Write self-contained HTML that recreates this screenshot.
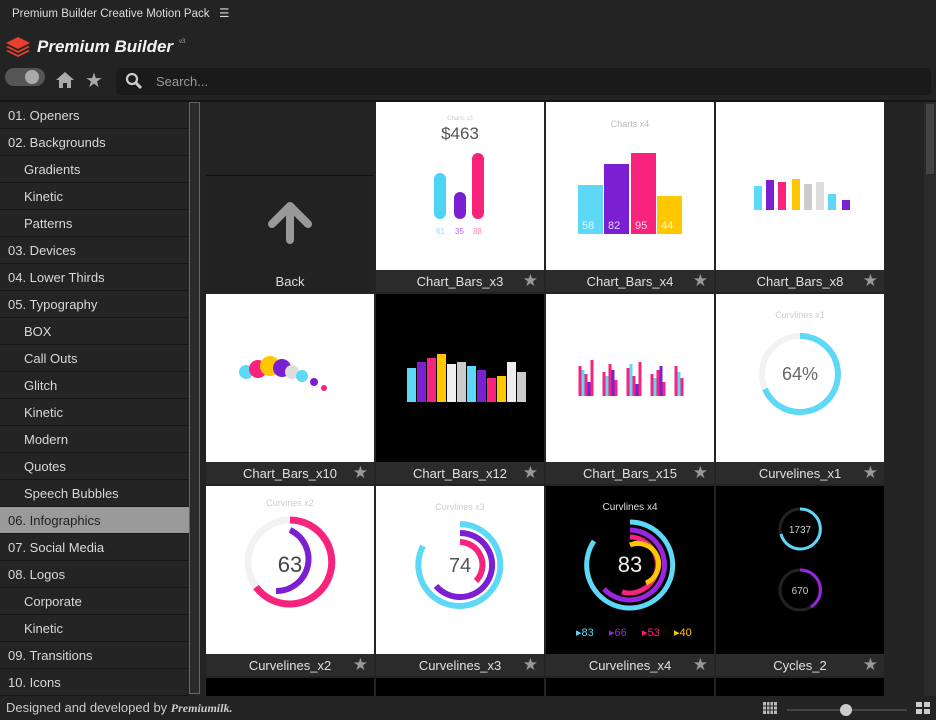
<!DOCTYPE html>
<html><head><meta charset="utf-8"><style>
*{margin:0;padding:0;box-sizing:border-box}
body{width:936px;height:720px;background:#232323;font-family:"Liberation Sans",sans-serif;color:#ddd;position:relative;overflow:hidden}
.abs{position:absolute}
.side div{height:27px;line-height:28px;font-size:13px;color:#d8d8d8;border-bottom:1px solid #151515;padding-left:8px;background:#242424}
.side div.s{padding-left:24px}
.side div.sel{background:#9a9a9a;color:#222}
.cell{position:absolute;width:168px;height:190px;background:#1c1c1c}
.cell svg{display:block}
.cap{position:absolute;left:0;top:168px;width:168px;height:22px;background:#2b2b2b;color:#e0e0e0;font-size:13px;text-align:center;line-height:24px}
.cap .st{position:absolute;right:6px;top:0;color:#999;font-size:17px;line-height:22px}
</style></head><body>
<div class="abs" style="left:12px;top:6px;font-size:11.5px;color:#ddd">Premium Builder Creative Motion Pack &nbsp;&nbsp;☰</div>
<svg class="abs" style="left:5px;top:36px" width="26" height="22" viewBox="0 0 26 22"><path d="M13 1L25 7L13 13L1 7Z" fill="#e8402c"/><path d="M3 10L13 15L23 10L25 11L13 17L1 11Z" fill="#e8402c"/><path d="M3 14L13 19L23 14L25 15L13 21L1 15Z" fill="#e8402c"/></svg>
<div class="abs" style="left:37px;top:37px;font-size:17px;font-weight:bold;font-style:italic;color:#f2f2f2">Premium Builder</div>
<div class="abs" style="left:179px;top:39px;font-size:6px;color:#aaa">v3</div>
<div class="abs" style="left:5px;top:68px;width:40px;height:18px;border-radius:9px;background:#555"></div>
<div class="abs" style="left:25px;top:70px;width:14px;height:14px;border-radius:7px;background:#aaa"></div>
<svg class="abs" style="left:55px;top:71px" width="20" height="18" viewBox="0 0 20 18"><path d="M10 1L19 9H16V17H12V12H8V17H4V9H1Z" fill="#aaa"/></svg>
<div class="abs" style="left:85px;top:68px;font-size:20px;color:#aaa">★</div>
<div class="abs" style="left:116px;top:68px;width:815px;height:27px;background:#1a1a1a;border-radius:4px"></div>
<svg class="abs" style="left:125px;top:72px" width="18" height="18" viewBox="0 0 18 18"><circle cx="7" cy="7" r="5" stroke="#ccc" stroke-width="2.2" fill="none"/><path d="M11 11L16 16" stroke="#ccc" stroke-width="3"/></svg>
<div class="abs" style="left:156px;top:74px;font-size:13px;color:#999">Search...</div>
<div class="abs" style="left:0;top:100px;width:936px;height:2px;background:#151515"></div>
<div class="abs side" style="left:0;top:102px;width:189px">
<div>01. Openers</div><div>02. Backgrounds</div><div class="s">Gradients</div><div class="s">Kinetic</div><div class="s">Patterns</div><div>03. Devices</div><div>04. Lower Thirds</div><div>05. Typography</div><div class="s">BOX</div><div class="s">Call Outs</div><div class="s">Glitch</div><div class="s">Kinetic</div><div class="s">Modern</div><div class="s">Quotes</div><div class="s">Speech Bubbles</div><div class="sel">06. Infographics</div><div>07. Social Media</div><div>08. Logos</div><div class="s">Corporate</div><div class="s">Kinetic</div><div>09. Transitions</div><div>10. Icons</div>
</div>
<div class="abs" style="left:189px;top:102px;width:11px;height:592px;background:#2a2a2a;border:1px solid #666"></div>
<div class="abs" style="left:924px;top:102px;width:12px;height:594px;background:#2a2a2a"></div>
<div class="abs" style="left:926px;top:104px;width:8px;height:70px;background:#444"></div>

<div class="cell" style="left:206px;top:102px;background:#232323">
<div class="abs" style="left:0;top:73px;width:168px;height:117px;background:#222;border-top:1px solid #111"></div>
<svg class="abs" style="left:62px;top:100px" width="44" height="42" viewBox="0 0 44 42"><path d="M22 4L40 22M22 4L4 22M22 6V38" stroke="#999" stroke-width="8" stroke-linecap="round" fill="none"/></svg>
<div class="abs" style="left:0;top:172px;width:168px;text-align:center;font-size:13px;color:#ddd">Back</div>
</div>

<div class="cell" style="left:376px;top:102px"><svg width="168" height="168"><rect width="168" height="168" fill="#fff"/><text x="84" y="18" font-size="6" fill="#ccc" text-anchor="middle">Charts x3</text><text x="84" y="37" font-size="17" fill="#555" text-anchor="middle" font-family="Liberation Sans">$463</text><rect x="58" y="71" width="12" height="46" rx="6" fill="#4dd4f5"/><rect x="78" y="90" width="12" height="27" rx="6" fill="#7a1fd1"/><rect x="96" y="51" width="12" height="66" rx="6" fill="#f7237a"/><text x="60" y="132" font-size="8" fill="#9de">61</text><text x="79" y="132" font-size="8" fill="#a6e">35</text><text x="97" y="132" font-size="8" fill="#f8a">88</text></svg><div class="cap">Chart_Bars_x3<span class="st">★</span></div></div>

<div class="cell" style="left:546px;top:102px"><svg width="168" height="168"><rect width="168" height="168" fill="#fff"/><text x="84" y="25" font-size="9" fill="#bbb" text-anchor="middle">Charts x4</text><rect x="32" y="83" width="25" height="49" fill="#5dd8f7"/><rect x="58" y="62" width="25" height="70" fill="#7b1fd3"/><rect x="85" y="51" width="25" height="81" fill="#f7237d"/><rect x="111" y="94" width="25" height="38" fill="#ffc700"/><g fill="#fff" font-size="11" opacity=".8"><text x="36" y="127">58</text><text x="62" y="127">82</text><text x="89" y="127">95</text><text x="115" y="127">44</text></g></svg><div class="cap">Chart_Bars_x4<span class="st">★</span></div></div>

<div class="cell" style="left:716px;top:102px"><svg width="168" height="168"><rect width="168" height="168" fill="#fff"/><g><rect x="38" y="84" width="8" height="24" fill="#5dd8f7"/><rect x="50" y="78" width="8" height="30" fill="#7b1fd3"/><rect x="62" y="80" width="8" height="28" fill="#f7237d"/><rect x="76" y="77" width="8" height="31" fill="#ffc700"/><rect x="88" y="82" width="8" height="26" fill="#ccc"/><rect x="100" y="80" width="8" height="28" fill="#ddd"/><rect x="112" y="92" width="8" height="16" fill="#5dd8f7"/><rect x="126" y="98" width="8" height="10" fill="#7b1fd3"/></g></svg><div class="cap">Chart_Bars_x8<span class="st">★</span></div></div>

<div class="cell" style="left:206px;top:294px"><svg width="168" height="168"><rect width="168" height="168" fill="#fff"/><circle cx="40" cy="78" r="7" fill="#5dd8f7"/><circle cx="52" cy="75" r="9" fill="#f7237d"/><circle cx="64" cy="72" r="10" fill="#ffc700"/><circle cx="76" cy="74" r="9" fill="#7b1fd3"/><circle cx="86" cy="78" r="7" fill="#ddd"/><circle cx="96" cy="82" r="6" fill="#5dd8f7"/><circle cx="108" cy="88" r="4" fill="#7b1fd3"/><circle cx="118" cy="94" r="3" fill="#f7237d"/></svg><div class="cap">Chart_Bars_x10<span class="st">★</span></div></div>

<div class="cell" style="left:376px;top:294px"><svg width="168" height="168"><rect width="168" height="168" fill="#000"/><g><rect x="31" y="74" width="9" height="34" fill="#5dd8f7"/><rect x="41" y="68" width="9" height="40" fill="#7b1fd3"/><rect x="51" y="64" width="9" height="44" fill="#f7237d"/><rect x="61" y="60" width="9" height="48" fill="#ffc700"/><rect x="71" y="70" width="9" height="38" fill="#eee"/><rect x="81" y="68" width="9" height="40" fill="#ccc"/><rect x="91" y="72" width="9" height="36" fill="#5dd8f7"/><rect x="101" y="76" width="9" height="32" fill="#7b1fd3"/><rect x="111" y="84" width="9" height="24" fill="#f7237d"/><rect x="121" y="82" width="9" height="26" fill="#ffc700"/><rect x="131" y="68" width="9" height="40" fill="#eee"/><rect x="141" y="78" width="9" height="30" fill="#ccc"/></g></svg><div class="cap">Chart_Bars_x12<span class="st">★</span></div></div>

<div class="cell" style="left:546px;top:294px"><svg width="168" height="168"><rect width="168" height="168" fill="#fff"/><g stroke-width="3"><path d="M34 102V72M40 102V80M46 102V66M58 102V78M64 102V70M70 102V86M82 102V74M88 102V82M94 102V68M106 102V80M112 102V76M118 102V88M130 102V72M136 102V84" stroke="#f7237d"/><path d="M37 102V76M61 102V82M85 102V70M109 102V84M133 102V78" stroke="#5dd8f7"/><path d="M43 102V88M67 102V76M91 102V90M115 102V72" stroke="#7b1fd3"/></g></svg><div class="cap">Chart_Bars_x15<span class="st">★</span></div></div>

<div class="cell" style="left:716px;top:294px"><svg width="168" height="168"><rect width="168" height="168" fill="#fff"/><text x="84" y="24" font-size="9" fill="#ccc" text-anchor="middle">Curvlines x1</text><circle cx="84" cy="80" r="38" stroke="#f2f2f2" stroke-width="6" fill="none"/><path d="M84 42A38 38 0 1 1 49 95" stroke="#5dd8f7" stroke-width="6" fill="none"/><text x="84" y="86" font-size="18" fill="#666" text-anchor="middle">64%</text></svg><div class="cap">Curvelines_x1<span class="st">★</span></div></div>

<div class="cell" style="left:206px;top:486px"><svg width="168" height="168"><rect width="168" height="168" fill="#fff"/><text x="84" y="20" font-size="9" fill="#ccc" text-anchor="middle">Curvines x2</text><circle cx="84" cy="76" r="42" stroke="#f2f2f2" stroke-width="7" fill="none"/><path d="M84 34A42 42 0 1 1 50 101" stroke="#f7237d" stroke-width="7" fill="none"/><path d="M84 44A32 32 0 0 1 70 105" stroke="#7b1fd3" stroke-width="6" fill="none"/><text x="84" y="86" font-size="22" fill="#444" text-anchor="middle">63</text></svg><div class="cap">Curvelines_x2<span class="st">★</span></div></div>

<div class="cell" style="left:376px;top:486px"><svg width="168" height="168"><rect width="168" height="168" fill="#fff"/><text x="84" y="24" font-size="9" fill="#ccc" text-anchor="middle">Curvlines x3</text><path d="M84 38A41 41 0 1 1 47 60" stroke="#5dd8f7" stroke-width="6" fill="none"/><path d="M84 47A32 32 0 1 1 60 100" stroke="#7b1fd3" stroke-width="6" fill="none"/><path d="M84 56A23 23 0 0 1 100 95" stroke="#f7237d" stroke-width="6" fill="none"/><text x="84" y="86" font-size="20" fill="#555" text-anchor="middle">74</text></svg><div class="cap">Curvelines_x3<span class="st">★</span></div></div>

<div class="cell" style="left:546px;top:486px"><svg width="168" height="168"><rect width="168" height="168" fill="#000"/><text x="84" y="24" font-size="10" fill="#ddd" text-anchor="middle">Curvlines x4</text><path d="M84 36A43 43 0 1 1 48 55" stroke="#5dd8f7" stroke-width="5" fill="none"/><path d="M84 44A35 35 0 1 1 58 103" stroke="#9a25e0" stroke-width="5" fill="none"/><path d="M84 51A28 28 0 1 1 76 106" stroke="#f7237d" stroke-width="5" fill="none"/><path d="M84 59A20 20 0 0 1 100 97" stroke="#ffc700" stroke-width="5" fill="none"/><text x="84" y="86" font-size="22" fill="#eee" text-anchor="middle">83</text><g font-size="11"><text x="30" y="150" fill="#5dd8f7">▸83</text><text x="63" y="150" fill="#9a25e0">▸66</text><text x="96" y="150" fill="#f7237d">▸53</text><text x="128" y="150" fill="#ffc700">▸40</text></g></svg><div class="cap">Curvelines_x4<span class="st">★</span></div></div>

<div class="cell" style="left:716px;top:486px"><svg width="168" height="168"><rect width="168" height="168" fill="#000"/><circle cx="84" cy="43" r="20" stroke="#222" stroke-width="3" fill="none"/><path d="M84 23A20 20 0 1 1 65 48" stroke="#5dd8f7" stroke-width="3" fill="none"/><text x="84" y="47" font-size="10" fill="#ccc" text-anchor="middle">1737</text><circle cx="84" cy="104" r="20" stroke="#222" stroke-width="3" fill="none"/><path d="M84 84A20 20 0 0 1 95 121" stroke="#9a25e0" stroke-width="3" fill="none"/><text x="84" y="108" font-size="10" fill="#ccc" text-anchor="middle">670</text></svg><div class="cap">Cycles_2<span class="st">★</span></div></div>

<div class="abs" style="left:206px;top:678px;width:168px;height:18px;background:#000"></div>
<div class="abs" style="left:376px;top:678px;width:168px;height:18px;background:#000"></div>
<div class="abs" style="left:546px;top:678px;width:168px;height:18px;background:#000"></div>
<div class="abs" style="left:716px;top:678px;width:168px;height:18px;background:#000"></div>

<div class="abs" style="left:0;top:696px;width:936px;height:24px;background:#232323"></div>
<div class="abs" style="left:6px;top:700px;font-size:13px;color:#ccc">Designed and developed by <i style="font-family:'Liberation Serif',serif;font-weight:bold;font-size:12px">Premiumilk.</i></div>
<svg class="abs" style="left:763px;top:702px" width="14" height="12"><g fill="#bbb"><rect width="14" height="12"/></g><path d="M3.5 0V12M7 0V12M10.5 0V12M0 4H14M0 8H14" stroke="#232323"/></svg>
<div class="abs" style="left:787px;top:709px;width:120px;height:2px;background:#444"></div>
<div class="abs" style="left:840px;top:704px;width:12px;height:12px;border-radius:6px;background:#ccc"></div>
<svg class="abs" style="left:916px;top:702px" width="14" height="12"><g fill="#ccc"><rect width="6" height="5"/><rect x="8" width="6" height="5"/><rect y="7" width="6" height="5"/><rect x="8" y="7" width="6" height="5"/></g></svg>
</body></html>
